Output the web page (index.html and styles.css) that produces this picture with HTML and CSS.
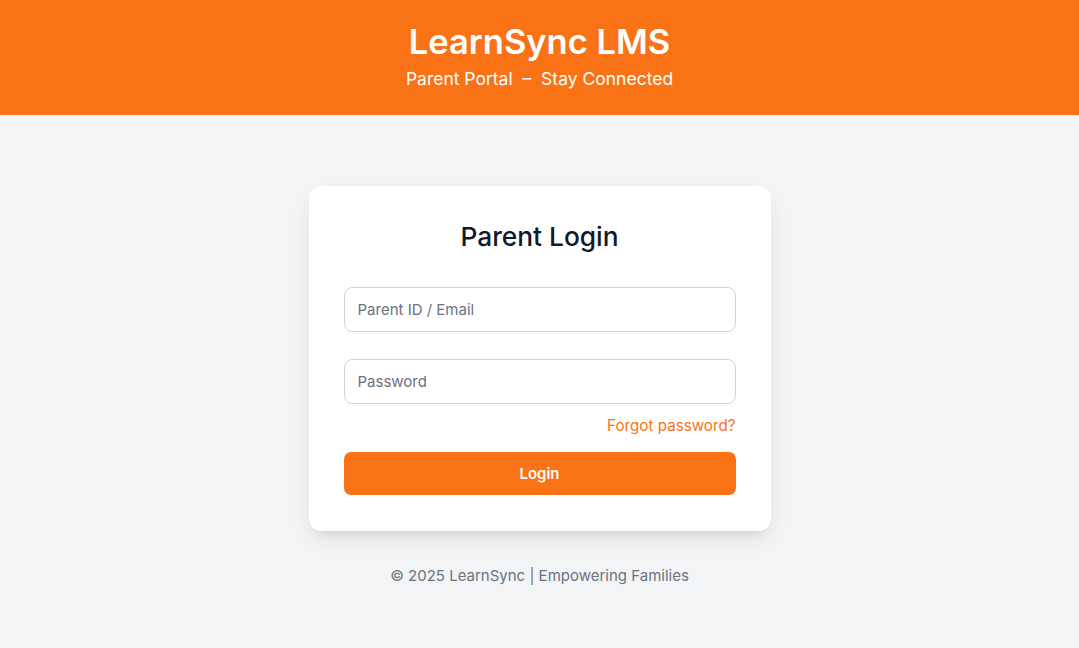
FILE: index.html
```html
<!DOCTYPE html>
<html lang="en">
<head>
<meta charset="utf-8">
<title>LearnSync LMS – Parent Portal</title>
<link rel="stylesheet" href="styles.css">
</head>
<body>
<header class="site-header">
  <h1 class="brand">LearnSync LMS</h1>
  <p class="tagline">Parent Portal &nbsp;–&nbsp; Stay Connected</p>
</header>
<main class="main">
  <form class="card">
    <h2 class="card-title">Parent Login</h2>
    <input class="field field-first" type="text" placeholder="Parent ID / Email">
    <input class="field field-second" type="password" placeholder="Password">
    <div class="forgot-row"><a class="forgot" href="#">Forgot password?</a></div>
    <button class="btn" type="button">Login</button>
  </form>
  <footer class="footer">© 2025 LearnSync | Empowering Families</footer>
</main>
</body>
</html>
```
FILE: styles.css
```css
* { box-sizing: border-box; }
html, body { margin: 0; padding: 0; }
body {
  font-family: Inter, "Noto Sans", Arial, sans-serif;
  background: #f3f4f6;
  color: #111827;
  min-height: 648px;
}
.site-header {
  background: #f97316;
  color: #ffffff;
  text-align: center;
  padding: 22px 0 24px;
}
.brand {
  margin: 0;
  font-size: 34.5px;
  line-height: 40px;
  font-weight: 600;
}
.tagline {
  margin: 5px 0 0;
  font-size: 17.5px;
  line-height: 24px;
}
.main {
  display: flex;
  flex-direction: column;
  align-items: center;
  padding-top: 71px;
}
.card {
  width: 462px;
  background: #ffffff;
  border-radius: 12px;
  padding: 35px 35px 36px;
  box-shadow: 0 10px 25px -5px rgba(0,0,0,0.10), 0 8px 10px -6px rgba(0,0,0,0.08);
  display: flex;
  flex-direction: column;
}
.card-title {
  margin: 0 0 34px;
  text-align: center;
  font-size: 26.3px;
  line-height: 32px;
  font-weight: 500;
  color: #111827;
}
.field {
  display: block;
  width: 100%;
  height: 45px;
  border: 1px solid #d1d5db;
  border-radius: 8px;
  padding: 0 13px;
  font-family: inherit;
  font-size: 15px;
  color: #111827;
  background: #fff;
  outline: none;
}
.field::placeholder { color: #6b7280; }
.field-second { margin-top: 27px; }
.forgot-row {
  text-align: right;
  margin-top: 9px;
  line-height: 24px;
}
.forgot {
  color: #f97316;
  text-decoration: none;
  font-size: 15.2px;
}
.btn {
  margin-top: 14px;
  height: 43px;
  width: 100%;
  border: 0;
  border-radius: 7px;
  background: #f97316;
  color: #ffffff;
  font-family: inherit;
  font-size: 15px;
  font-weight: 600;
}
.footer {
  margin-top: 33px;
  font-size: 15px;
  line-height: 24px;
  color: #6b7280;
}
```
